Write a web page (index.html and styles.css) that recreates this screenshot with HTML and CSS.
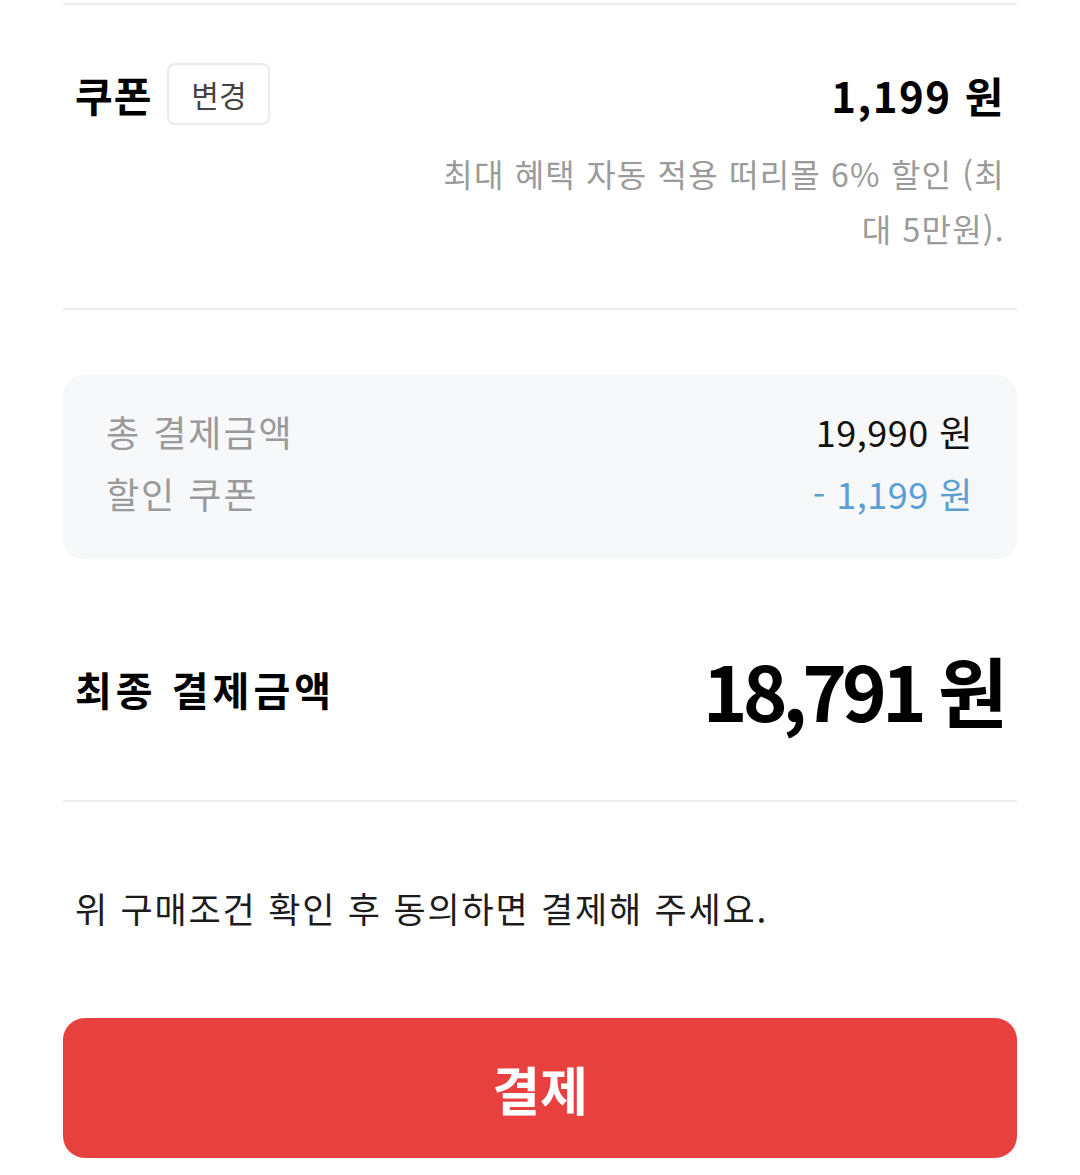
FILE: index.html
```html
<!DOCTYPE html>
<html lang="ko">
<head>
  <meta charset="UTF-8">
  <meta name="viewport" content="width=device-width, initial-scale=1.0">
  <title>결제</title>
  <link rel="stylesheet" href="styles.css">
</head>
<body>

  <div class="container">
    <div class="divider top"></div>

    <!-- Coupon -->
    <div class="coupon">
      <div class="coupon-row">
        <div class="coupon-title">
          <span class="label">쿠폰</span>
          <button class="change-btn">변경</button>
        </div>
        <div class="coupon-price">1,199 원</div>
      </div>
      <p class="coupon-desc">최대 혜택 자동 적용 떠리몰 6% 할인 (최<br>대 5만원).</p>
    </div>

    <div class="divider"></div>

    <!-- Summary box -->
    <div class="summary">
      <div class="summary-row">
        <span class="summary-label">총 결제금액</span>
        <span class="summary-value">19,990 원</span>
      </div>
      <div class="summary-row">
        <span class="summary-label">할인 쿠폰</span>
        <span class="summary-value discount">- 1,199 원</span>
      </div>
    </div>

    <!-- Final amount -->
    <div class="final">
      <span class="final-label">최종 결제금액</span>
      <span class="final-price">18,791 원</span>
    </div>

    <div class="divider"></div>

    <p class="notice">위 구매조건 확인 후 동의하면 결제해 주세요.</p>

    <button class="pay-btn">결제</button>
  </div>

</body>
</html>
```

FILE: styles.css
```css
body {
  margin: 0;
  padding: 0;
  background: #fff;
  color: #111;
  font-family: 'Noto Sans CJK KR', 'Noto Sans', sans-serif;
}

.container {
  width: 954px;
  margin: 0 auto;
  padding-top: 3px;
}

.divider {
  height: 2px;
  background: #ececec;
}

/* coupon */
.coupon {
  padding: 58px 12px 52px;
}

.coupon-row {
  display: flex;
  justify-content: space-between;
  align-items: center;
  height: 62px;
}

.coupon-title {
  display: flex;
  align-items: center;
  gap: 15px;
}

.label {
  font-size: 41px;
  font-weight: 700;
  line-height: 1;
  color: #000;
  letter-spacing: 1px;
}

.change-btn {
  width: 103px;
  height: 62px;
  padding: 0;
  background: #fff;
  border: 2px solid #ebebeb;
  border-radius: 8px;
  font-family: inherit;
  font-size: 30px;
  color: #444;
}

.coupon-price {
  font-size: 42px;
  font-weight: 700;
  color: #000;
  letter-spacing: 1.5px;
}

.coupon-desc {
  margin: 21px 0 0;
  text-align: right;
  font-size: 32px;
  line-height: 55px;
  color: #9b9b9b;
  letter-spacing: 1.2px;
}

/* summary box */
.summary {
  margin-top: 65px;
  background: #f7f8fa;
  border-radius: 20px;
  padding: 25px 44px 35px 43px;
}

.summary-row {
  display: flex;
  justify-content: space-between;
  align-items: center;
  height: 62px;
  font-size: 36px;
}

.summary-label {
  color: #9a9a9a;
  letter-spacing: 2px;
}

.summary-value {
  color: #111;
  letter-spacing: 0.5px;
}

.summary-value.discount {
  color: #5a9fd3;
}

/* final amount */
.final {
  display: flex;
  justify-content: space-between;
  align-items: center;
  height: 100px;
  padding: 80px 14px 61px 12px;
}

.final-label {
  font-size: 40px;
  font-weight: 700;
  color: #000;
  letter-spacing: 4px;
}

.final-price {
  font-size: 76px;
  font-weight: 700;
  color: #000;
  letter-spacing: -5px;
}

.notice {
  margin: 81px 0 0;
  padding: 0 12px;
  font-size: 35px;
  line-height: 50px;
  color: #1c1c1c;
  letter-spacing: 1.8px;
}

.pay-btn {
  display: block;
  width: 100%;
  height: 140px;
  margin-top: 85px;
  padding: 0;
  background: #e83f3f;
  border: none;
  border-radius: 22px;
  font-family: inherit;
  font-size: 52px;
  font-weight: 700;
  color: #fff;
  cursor: pointer;
}
```
